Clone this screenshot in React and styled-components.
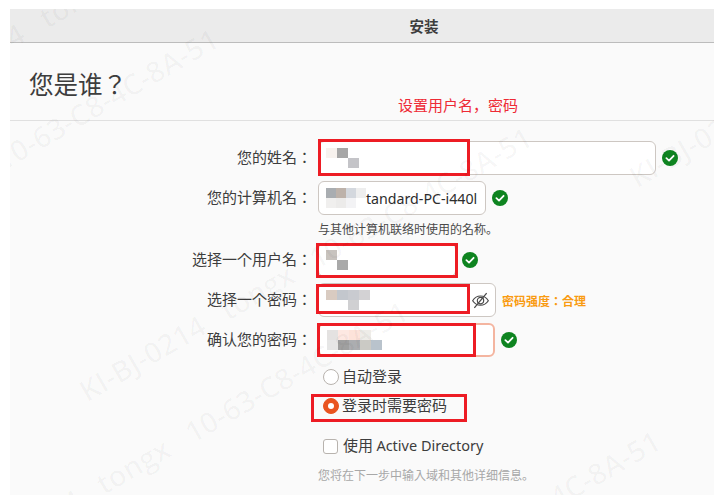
import React from "react";
import styled, { createGlobalStyle } from "styled-components";

const GlobalStyle = createGlobalStyle`
  html, body {
    margin: 0;
    padding: 0;
    background: #ffffff;
  }
  body {
    font-family: "Noto Sans CJK JP", "Noto Sans", sans-serif;
    color: #3d3d3d;
  }
`;

const Page = styled.div`
  width: 714px;
  height: 495px;
  padding: 9px 0 0 10px;
  box-sizing: border-box;
  overflow: hidden;
`;

const Window = styled.div`
  position: relative;
  height: 486px;
  background: #fafafa;
  overflow: hidden;
`;

const TitleBar = styled.div`
  height: 33px;
  padding-left: 124px;
  background: #ebebeb;
  border-bottom: 1px solid #bcbcbc;
  display: flex;
  align-items: center;
  justify-content: center;
  font-size: 14.5px;
  line-height: 18px;
  font-weight: 700;
  color: #3d3d3d;
`;

const Header = styled.div`
  height: 78px;
  border-bottom: 1px solid #e0e0e0;
  padding: 4px 0 0 19px;
  box-sizing: border-box;
  display: flex;
  align-items: center;
  font-size: 24.5px;
  line-height: 32px;
  color: #3d3d3d;
`;

const Form = styled.div`
  padding-top: 20px;
  display: flex;
  flex-direction: column;
  gap: 6px;
`;

const Row = styled.div`
  display: flex;
  align-items: center;
  height: 34px;
  gap: 6px;
`;

const Label = styled.div`
  width: 302px;
  margin-top: -2px;
  text-align: right;
  font-size: 15px;
  line-height: 20px;
  white-space: nowrap;
`;

const Input = styled.div`
  width: ${({ $width }) => $width}px;
  height: 34px;
  box-sizing: border-box;
  background: #ffffff;
  border: ${({ $warn }) => ($warn ? "2px solid #f4b5a0" : "1px solid #cdc7c2")};
  border-radius: 6px;
  padding: 0 7px;
  display: flex;
  align-items: center;
  justify-content: space-between;
  overflow: hidden;
  color: #2d2d2d;
  white-space: nowrap;
`;

const InputText = styled.div`
  display: flex;
  align-items: center;
  min-width: 0;
  font-family: "Noto Sans", sans-serif;
  font-size: 14.2px;
`;

const Mosaic = styled.div`
  display: grid;
  grid-template-columns: repeat(${({ $cols }) => $cols}, ${({ $size }) => $size}px);
  grid-auto-rows: 10px;
  flex: none;
`;

const Tile = styled.div`
  background: ${({ $color }) => $color};
`;

const Hint = styled.div`
  margin-left: 308px;
  height: 16px;
  line-height: 16px;
  font-size: 12px;
  color: ${({ $muted }) => ($muted ? "#a8a8a8" : "#4a4a4a")};
`;

const Strength = styled.div`
  font-size: 12px;
  font-weight: 700;
  color: #f99b11;
  white-space: nowrap;
`;

const Options = styled.div`
  margin-left: 313px;
  padding-top: 4px;
  display: flex;
  flex-direction: column;
`;

const Option = styled.div`
  height: 20px;
  margin-bottom: ${({ $after }) => $after}px;
  display: flex;
  align-items: center;
  gap: 3px;
  font-size: 15px;
  line-height: 20px;
  white-space: nowrap;
`;

const OptionText = styled.span`
  position: relative;
  top: -1px;
`;

const Latin = styled.span`
  font-family: "Noto Sans", sans-serif;
  font-size: 14.5px;
`;

const Radio = styled.span`
  width: 16px;
  height: 16px;
  box-sizing: border-box;
  border-radius: 50%;
  flex: none;
  display: flex;
  align-items: center;
  justify-content: center;
  border: 1px solid ${({ $on }) => ($on ? "#e95420" : "#b8b3ae")};
  background: ${({ $on }) => ($on ? "#e95420" : "#ffffff")};
  &::after {
    content: "";
    width: 6px;
    height: 6px;
    border-radius: 50%;
    background: ${({ $on }) => ($on ? "#ffffff" : "transparent")};
  }
`;

const Checkbox = styled.span`
  width: 15px;
  height: 15px;
  margin-right: 2px;
  box-sizing: border-box;
  flex: none;
  background: #ffffff;
  border: 1px solid #b8b3ae;
  border-radius: 3px;
`;

const RedBox = styled.div`
  position: absolute;
  left: ${({ $x }) => $x - 10}px;
  top: ${({ $y }) => $y - 9}px;
  width: ${({ $w }) => $w}px;
  height: ${({ $h }) => $h}px;
  box-sizing: border-box;
  border: 3px solid #ed1c24;
  pointer-events: none;
`;

const Note = styled.div`
  position: absolute;
  left: 388px;
  top: 86px;
  font-family: "Noto Sans CJK SC", sans-serif;
  font-size: 15px;
  line-height: 20px;
  color: #ee2a35;
`;

const Mark = styled.div`
  position: absolute;
  left: ${({ $x }) => $x - 10}px;
  top: ${({ $y }) => $y - 9}px;
  transform: rotate(-30deg);
  transform-origin: left bottom;
  font-family: "Open Sans", sans-serif;
  font-size: 29px;
  line-height: 30px;
  font-weight: 600;
  white-space: pre;
  color: rgba(0, 0, 0, 0.032);
  pointer-events: none;
`;

const CheckIcon = () => (
  <svg width="16" height="16" viewBox="0 0 16 16" style={{ flex: "none" }}>
    <circle cx="8" cy="8" r="8" fill="#0e8420" />
    <path d="M4.4 8.2 7 10.6 11.600 5.800" fill="none" stroke="#fff" strokeWidth="1.8" strokeLinecap="round" strokeLinejoin="round" />
  </svg>
);

const EyeOffIcon = () => (
  <svg width="17" height="17" viewBox="0 0 16 16" style={{ flex: "none", marginRight: -1 }}>
    <path d="M.6 8.2C2.500 5.200 5 3.800 8 3.800S13.500 5.200 15.400 8.200C13.500 11 11 12.400 8 12.400S2.500 11 .6 8.2Z" fill="none" stroke="#4a4a4a" strokeWidth="1.100" />
    <circle cx="8" cy="8.100" r="3" fill="none" stroke="#4a4a4a" strokeWidth="1.100" />
    <path d="M2.200 15 13.800 1" stroke="#4a4a4a" strokeWidth="1.200" />
  </svg>
);

const _ = "transparent";

const mosaics = {
  name: { cols: 3, size: 11, tiles: ["#f7f2ee", "#a6a6a6", _, _, _, "#c4c4c8"] },
  host: { cols: 4, size: 10, tiles: ["#a9adb1", "#bdb2aa", "#d4d8de", "#eeeeee", "#f0efee", "#ecebea", "#f3f3f5", "#ffffff"] },
  user: { cols: 3, size: 11, tiles: ["#c8c3be", _, _, _, "#a9a9a9", _] },
  pass: { cols: 4, size: 11, tiles: ["#d9cbc1", "#c3c7cd", "#c9cbd0", "#d3d2d4", _, _, "#d0d0d2", _] },
  confirm: { cols: 5, size: 11, tiles: ["#e4e2e1", "#fde8e2", "#fde3da", "#eeece8", _, "#e6e6e6", "#a0a0a0", "#acadb0", "#cbcac5", "#b9c3cc"] },
};

const Blur = ({ kind }) => (
  <Mosaic $cols={mosaics[kind].cols} $size={mosaics[kind].size}>
    {mosaics[kind].tiles.map((color, i) => (
      <Tile key={i} $color={color} />
    ))}
  </Mosaic>
);

export default function App() {
  return (
    <Page>
      <GlobalStyle />
      <Window>
        <TitleBar>安装</TitleBar>
        <Header>您是谁？</Header>
        <Note>设置用户名，密码</Note>
        <Form>
          <Row>
            <Label>您的姓名：</Label>
            <Input $width={338}><Blur kind="name" /></Input>
            <CheckIcon />
          </Row>
          <Row>
            <Label>您的计算机名：</Label>
            <Input $width={168}>
              <InputText><Blur kind="host" />tandard-PC-i440l</InputText>
            </Input>
            <CheckIcon />
          </Row>
          <Hint>与其他计算机联络时使用的名称。</Hint>
          <Row>
            <Label>选择一个用户名：</Label>
            <Input $width={138}><Blur kind="user" /></Input>
            <CheckIcon />
          </Row>
          <Row>
            <Label>选择一个密码：</Label>
            <Input $width={178}>
              <Blur kind="pass" />
              <EyeOffIcon />
            </Input>
            <Strength>密码强度：合理</Strength>
          </Row>
          <Row>
            <Label>确认您的密码：</Label>
            <Input $width={177} $warn><Blur kind="confirm" /></Input>
            <CheckIcon />
          </Row>
          <Options>
            <Option $after={9}><Radio /><OptionText>自动登录</OptionText></Option>
            <Option $after={20}><Radio $on /><OptionText>登录时需要密码</OptionText></Option>
            <Option $after={5}><Checkbox /><OptionText>使用 <Latin>Active Directory</Latin></OptionText></Option>
          </Options>
          <Hint $muted>您将在下一步中输入域和其他详细信息。</Hint>
        </Form>

        <RedBox $x={318} $y={139} $w={152} $h={37} />
        <RedBox $x={316} $y={243} $w={142} $h={35} />
        <RedBox $x={316} $y={284} $w={154} $h={30} />
        <RedBox $x={317} $y={323} $w={159} $h={34} />
        <RedBox $x={311} $y={394} $w={156} $h={28} />

        <Mark $x={-92} $y={84}>KI-BJ-0214   tongx</Mark>
        <Mark $x={5} $y={145}>10-63-C8-4C-8A-51</Mark>
        <Mark $x={89} $y={376}>KI-BJ-0214   tongx   10-63-C8-4C-8A-51</Mark>
        <Mark $x={639} $y={162}>KI-BJ-0214</Mark>
        <Mark $x={-35} $y={550}>KI-BJ-0214   tongx   10-63-C8-4C-8A-51</Mark>
        <Mark $x={447} $y={547}>10-63-C8-4C-8A-51</Mark>
      </Window>
    </Page>
  );
}
